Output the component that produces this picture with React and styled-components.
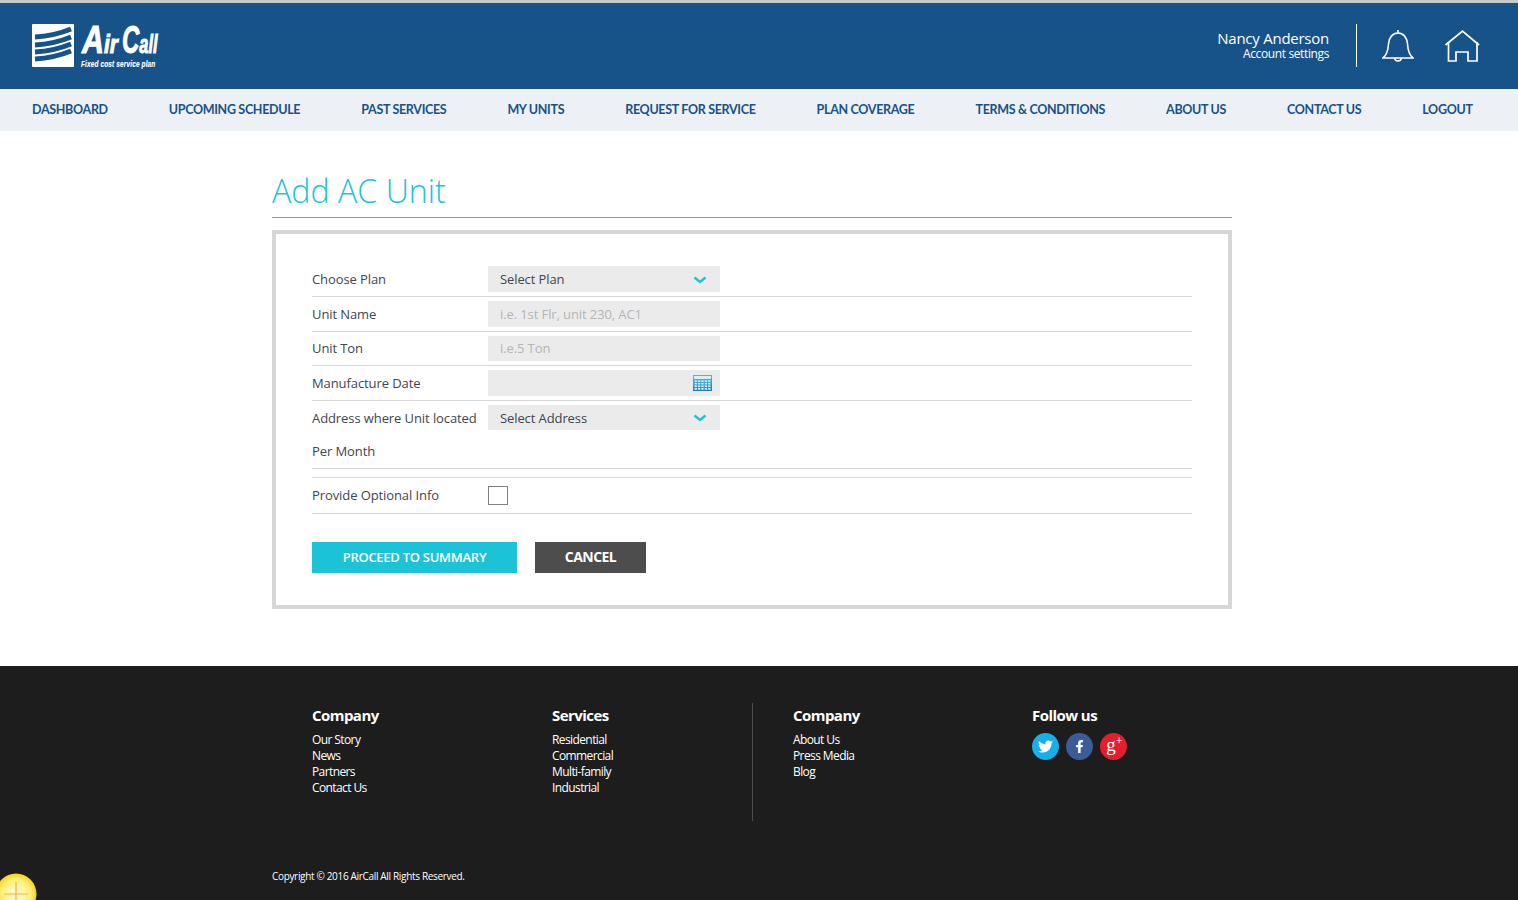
import React from 'react';
import styled, { createGlobalStyle } from 'styled-components';
import { FaTwitter, FaFacebookF } from 'react-icons/fa';

const GlobalStyle = createGlobalStyle`
  html, body {
    margin: 0;
    padding: 0;
    background: #fff;
    font-family: "Open Sans", "Liberation Sans", sans-serif;
  }
  * { box-sizing: border-box; }
`;

const Page = styled.div`
  position: relative;
  height: 900px;
  overflow: hidden;
  border-top: 3px solid #c9c9c9;
`;
const Header = styled.header`
  height: 86px;
  background: #175289;
  display: flex;
  align-items: center;
  justify-content: space-between;
  padding: 0 38px 0 32px;
`;
const UserArea = styled.div`
  display: flex;
  align-items: center;
`;
const UserInfo = styled.div`
  text-align: right;
  color: #fff;
  padding-right: 27px;
  border-right: 1px solid #fff;
  height: 43px;
  margin: 0 25px 2px 0;
  padding-top: 5px;
`;
const UserName = styled.div`
  font-size: 15px;
  font-weight: 500;
  line-height: 18px;
  letter-spacing: -0.25px;
`;
const AccountLink = styled.div`
  font-size: 12px;
  font-weight: 500;
  line-height: 14px;
  letter-spacing: -0.38px;
`;
const HeaderIcon = styled.svg`
  display: block;
  margin-left: ${({ $gap }) => $gap || 0}px;
`;
const Nav = styled.nav`
  height: 42px;
  background: #edf0f5;
  display: flex;
  align-items: center;
  gap: 61px;
  padding: 0 0 2px 32px;
`;
const NavItem = styled.a`
  font-family: Lato, "Liberation Sans", sans-serif;
  font-size: 12.5px;
  font-weight: 700;
  color: #175289;
  letter-spacing: -0.32px;
  white-space: nowrap;
`;
const Main = styled.main`
  width: 960px;
  height: 535px;
  margin-left: 272px;
  padding-top: 39px;
`;
const Title = styled.h1`
  margin: 0;
  height: 48px;
  border-bottom: 1px solid #9a9a9a;
  font-size: 32.2px;
  font-weight: 300;
  line-height: 41px;
  color: #1cc3d6;
`;
const FormBox = styled.form`
  margin-top: 12px;
  height: 379px;
  border: 4px solid #d6d6d6;
  padding: 32px 36px 0;
`;
const Row = styled.div`
  display: flex;
  align-items: flex-start;
  height: ${({ $height }) => $height}px;
  padding-top: ${({ $top }) => $top || 0}px;
  border-bottom: ${({ $plain }) => ($plain ? 'none' : '1px solid #d6d6d6')};
`;
const Label = styled.label`
  width: 176px;
  flex: none;
  height: 26px;
  font-size: 13px;
  line-height: ${({ $line }) => $line || 26}px;
  letter-spacing: -0.09px;
  color: #414550;
  white-space: nowrap;
`;
const Field = styled.div`
  width: 232px;
  height: ${({ $height }) => $height || 26}px;
  background: #ebebeb;
  display: flex;
  align-items: center;
  justify-content: space-between;
  padding: 0 8px ${({ $lift }) => $lift || 0}px 12px;
  font-size: 13px;
  letter-spacing: -0.1px;
  color: ${({ $placeholder }) => ($placeholder ? '#b5b5b5' : '#414550')};
`;
const Chevron = styled.svg`
  display: block;
  margin: 1px 5px 0 0;
`;
const Checkbox = styled.span`
  display: block;
  width: 20px;
  height: 19px;
  margin-top: 4px;
  background: #fff;
  border: 1px solid #808080;
`;
const Actions = styled.div`
  display: flex;
  gap: 18px;
  margin-top: 28px;
`;
const Button = styled.button`
  width: ${({ $width }) => $width}px;
  height: 31px;
  border: 0;
  padding: 0 0 2px;
  background: ${({ $bg }) => $bg};
  color: #fff;
  font-family: "Open Sans", sans-serif;
  font-size: ${({ $size }) => $size}px;
  font-weight: ${({ $weight }) => $weight};
  letter-spacing: ${({ $spacing }) => $spacing}px;
`;
const Footer = styled.footer`
  height: 234px;
  background: #1d1d1d;
  color: #fff;
  padding: 37px 0 0 312px;
  position: relative;
`;
const Columns = styled.div`
  display: flex;
  height: 118px;
`;
const Column = styled.div`
  width: ${({ $width }) => $width}px;
  flex: none;
  height: 118px;
  padding-left: ${({ $indent }) => $indent || 0}px;
  ${({ $divider }) => $divider && 'border-right: 1px solid #4b4b4b;'}
`;
const ColumnHeading = styled.h4`
  margin: 0 0 7px;
  padding-top: 2px;
  font-size: 15px;
  line-height: 20px;
  font-weight: 700;
  letter-spacing: -0.55px;
`;
const FooterLink = styled.div`
  font-size: 12px;
  line-height: 16px;
  letter-spacing: -0.6px;
`;
const Socials = styled.div`
  display: flex;
  gap: 7px;
  margin-top: 8px;
`;
const Social = styled.span`
  width: 27px;
  height: 27px;
  border-radius: 50%;
  background: ${({ $bg }) => $bg};
  display: flex;
  align-items: center;
  justify-content: center;
  font-size: ${({ $size }) => $size}px;
`;
const GooglePlus = styled.span`
  font-family: "Liberation Serif", serif;
  font-size: 19px;
  line-height: 19px;
  margin: -4px 0 0 2px;
  sup {
    font-size: 12px;
    line-height: 0;
    vertical-align: 6px;
  }
`;
const Copyright = styled.div`
  margin: 48px 0 0 -40px;
  font-size: 10px;
  line-height: 14px;
  letter-spacing: -0.33px;
`;
const HelpBadge = styled.svg`
  position: absolute;
  left: -5px;
  bottom: -15px;
`;

const navItems = [
  'DASHBOARD',
  'UPCOMING SCHEDULE',
  'PAST SERVICES',
  'MY UNITS',
  'REQUEST FOR SERVICE',
  'PLAN COVERAGE',
  'TERMS & CONDITIONS',
  'ABOUT US',
  'CONTACT US',
  'LOGOUT',
];

const footerColumns = [
  { title: 'Company', width: 240, links: ['Our Story', 'News', 'Partners', 'Contact Us'] },
  { title: 'Services', width: 201, divider: true, links: ['Residential', 'Commercial', 'Multi-family', 'Industrial'] },
  { title: 'Company', width: 279, indent: 40, links: ['About Us', 'Press Media', 'Blog'] },
];

// taller than the mark so the big initials keep their whole line box
const Logo = () => (
  <svg width="128" height="62" viewBox="0 -8 128 62">
    <rect y="1" width="42" height="43" rx="1" fill="#fff" />
    <g fill="none" stroke="#175289" strokeWidth="5">
      <path d="M3 14 Q22 13 39 6" />
      <path d="M3 22 Q22 21 39 14" />
      <path d="M3 29 Q22 28 39 21" />
      <path d="M3 36 Q22 35 39 28" />
    </g>
    <g fill="#fff" stroke="#fff" fontFamily="Liberation Sans" fontWeight="700" fontStyle="italic">
      <text transform="translate(50 30) scale(0.8 1)" strokeWidth="1">
        <tspan fontSize="38">A</tspan>
        <tspan fontSize="26">ir</tspan>
      </text>
      <text transform="translate(90 30) scale(0.63 1)" strokeWidth="1">
        <tspan fontSize="38">C</tspan>
        <tspan fontSize="26">all</tspan>
      </text>
      <text transform="translate(49 44) scale(0.76 1)" fontSize="8.500" strokeWidth="0.15" letterSpacing="0.2">Fixed cost service plan</text>
    </g>
  </svg>
);

const BellIcon = () => (
  <HeaderIcon width="32" height="34" viewBox="0 0 32 34" fill="none" stroke="#fff" strokeWidth="1.6">
    <path d="M16 1v3" />
    <path d="M1 29c4-3 5-7 5.500-14C7 8 11 4 16 4s9 4 9.500 11c.5 7 1.500 11 5.500 14z" />
    <path d="M12.500 29c.5 4 6.500 4 7 0" />
  </HeaderIcon>
);

const HomeIcon = () => (
  <HeaderIcon $gap={30} width="36" height="34" viewBox="0 0 36 34" fill="none" stroke="#fff" strokeWidth="1.7">
    <path d="M1.500 16 18.500 2 35 16" />
    <path d="M4.500 13v19H12V23h12v9h9V13" />
  </HeaderIcon>
);

const ChevronIcon = () => (
  <Chevron width="14" height="8" viewBox="0 0 14 8" fill="none" stroke="#1cc3d6" strokeWidth="2.400">
    <path d="M1.500 1.500 7 6l5.500-4.500" />
  </Chevron>
);

const CalendarIcon = () => (
  <svg width="19" height="16" viewBox="0 0 19 16">
    <defs>
      <linearGradient id="calendarBody" x1="0" y1="0" x2="0" y2="1">
        <stop offset="0" stopColor="#35c6de" />
        <stop offset="1" stopColor="#1f7fbd" />
      </linearGradient>
    </defs>
    <rect width="19" height="16" fill="url(#calendarBody)" />
    <rect x="1" y="1" width="17" height="3" fill="#d5f3f8" />
    <g fill="#d8eef7">
      {[0, 1, 2, 3].map((r) => [0, 1, 2, 3, 4].map((c) => (
        <rect key={`${r}-${c}`} x={1.5 + c * 3.4} y={5.2 + r * 2.6} width="2.400" height="1.700" />
      )))}
    </g>
  </svg>
);

const App = () => (
  <Page>
    <GlobalStyle />
    <Header>
      <Logo />
      <UserArea>
        <UserInfo>
          <UserName>Nancy Anderson</UserName>
          <AccountLink>Account settings</AccountLink>
        </UserInfo>
        <BellIcon />
        <HomeIcon />
      </UserArea>
    </Header>
    <Nav>
      {navItems.map((item) => <NavItem key={item}>{item}</NavItem>)}
    </Nav>
    <Main>
      <Title>Add AC Unit</Title>
      <FormBox>
        <Row $height={31}>
          <Label>Choose Plan</Label>
          <Field>Select Plan<ChevronIcon /></Field>
        </Row>
        <Row $height={35} $top={4}>
          <Label>Unit Name</Label>
          <Field $placeholder>i.e. 1st Flr, unit 230, AC1</Field>
        </Row>
        <Row $height={34} $top={4}>
          <Label $line={25}>Unit Ton</Label>
          <Field $placeholder $height={25} $lift={1}>i.e.5 Ton</Field>
        </Row>
        <Row $height={35} $top={4}>
          <Label>Manufacture Date</Label>
          <Field><span /><CalendarIcon /></Field>
        </Row>
        <Row $height={32} $top={4} $plain>
          <Label>Address where Unit located</Label>
          <Field $height={25}>Select Address<ChevronIcon /></Field>
        </Row>
        <Row $height={36} $top={5}>
          <Label>Per Month</Label>
        </Row>
        <Row $height={9} />
        <Row $height={36} $top={4}>
          <Label>Provide Optional Info</Label>
          <Checkbox />
        </Row>
        <Actions>
          <Button type="button" $width={205} $bg="#1cc3d6" $weight={600} $size={13} $spacing={-0.27}>PROCEED TO SUMMARY</Button>
          <Button type="button" $width={111} $bg="#4d4d4d" $weight={700} $size={14} $spacing={-0.55}>CANCEL</Button>
        </Actions>
      </FormBox>
    </Main>
    <Footer>
      <Columns>
        {footerColumns.map((col) => (
          <Column key={col.title + col.width} $width={col.width} $divider={col.divider} $indent={col.indent}>
            <ColumnHeading>{col.title}</ColumnHeading>
            {col.links.map((link) => <FooterLink key={link}>{link}</FooterLink>)}
          </Column>
        ))}
        <Column $width={200}>
          <ColumnHeading>Follow us</ColumnHeading>
          <Socials>
            <Social $bg="#18aee9" $size={15}><FaTwitter /></Social>
            <Social $bg="#3b5c98" $size={13}><FaFacebookF /></Social>
            <Social $bg="#e21f2e"><GooglePlus>g<sup>+</sup></GooglePlus></Social>
          </Socials>
        </Column>
      </Columns>
      <Copyright>Copyright © 2016 AirCall All Rights Reserved.</Copyright>
      <HelpBadge width="42" height="42" viewBox="0 0 42 42">
        <defs>
          <radialGradient id="glow">
            <stop offset="0" stopColor="#fffbe0" />
            <stop offset="0.7" stopColor="#fff07a" />
            <stop offset="1" stopColor="#f5d21c" />
          </radialGradient>
        </defs>
        <circle cx="21" cy="21" r="20.500" fill="url(#glow)" />
        <path d="M21 9v24M9 21h24" stroke="#f2b632" strokeWidth="1.200" />
      </HelpBadge>
    </Footer>
  </Page>
);

export default App;
